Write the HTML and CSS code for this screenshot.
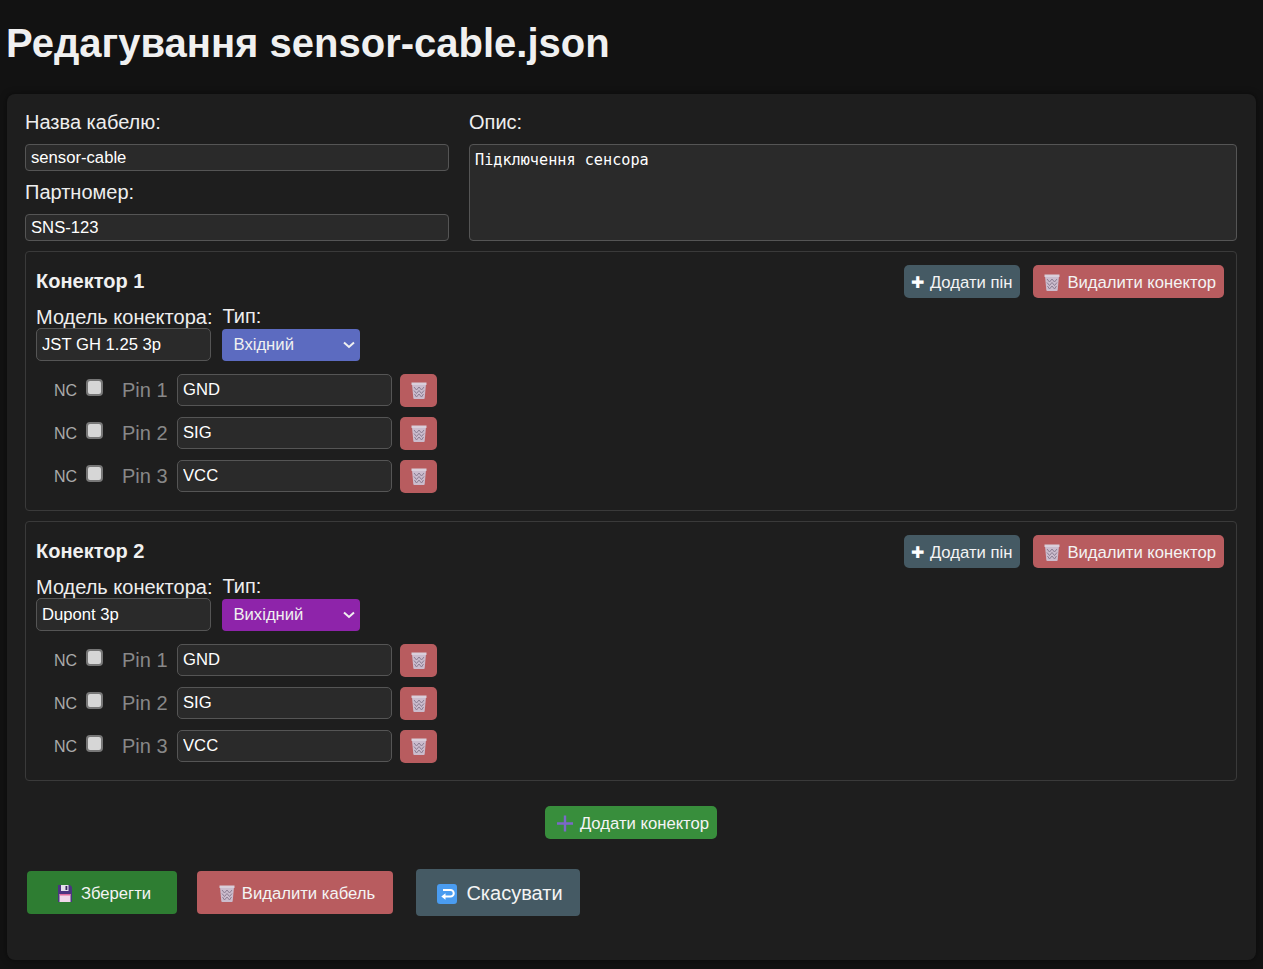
FILE: index.html
```html
<!DOCTYPE html>
<html>
<head>
  <title>Редагування sensor-cable.json</title>
  <link rel="stylesheet" href="styles.css">
</head>
<body>
  <svg class="defs" width="0" height="0">
    <symbol id="trash" viewBox="0 0 16 17">
      <path d="M1 2h14l-1.300 14a1 1 0 0 1-1 1H3.300a1 1 0 0 1-1-1z" fill="#cbbccd"/>
      <path d="M0.500 0.500h15v2.500H0.500z" fill="#d9cfdb"/>
      <path d="M3 5l2.500 3L8 5l2.500 3L13 5M3 8.500l2.500 3L8 8.500l2.500 3 2.500-3M3.500 12l2 3L8 12l2.500 3 2-3" fill="none" stroke="#85778c" stroke-width=".9"/>
    </symbol>
  </svg>

  <h1>Редагування sensor-cable.json</h1>

  <form class="panel">
    <div class="top-fields">
      <div class="col-left">
        <label>Назва кабелю:</label>
        <input type="text" class="field" value="sensor-cable">
        <label>Партномер:</label>
        <input type="text" class="field" value="SNS-123">
      </div>
      <div class="col-right">
        <label>Опис:</label>
        <textarea class="desc">Підключення сенсора</textarea>
      </div>
    </div>

    <div class="connector">
      <div class="conn-head">
        <h3>Конектор 1</h3>
        <div class="conn-actions">
          <button type="button" class="btn btn-slate"><span class="plus-bold">✚</span> Додати пін</button>
          <button type="button" class="btn btn-red"><svg class="ico"><use href="#trash"/></svg> Видалити конектор</button>
        </div>
      </div>
      <div class="conn-meta">
        <div class="meta-model">
          <label>Модель конектора:</label>
          <input type="text" class="model" value="JST GH 1.25 3p">
        </div>
        <div class="meta-type">
          <label>Тип:</label>
          <select class="type type-in"><option>Вхідний</option></select>
        </div>
      </div>
      <div class="pins">
        <div class="pin"><span class="nc">NC</span><input type="checkbox" class="check"><span class="pin-name">Pin 1</span><input type="text" class="pin-input" value="GND"><button type="button" class="pin-del"><svg class="ico"><use href="#trash"/></svg></button></div>
        <div class="pin"><span class="nc">NC</span><input type="checkbox" class="check"><span class="pin-name">Pin 2</span><input type="text" class="pin-input" value="SIG"><button type="button" class="pin-del"><svg class="ico"><use href="#trash"/></svg></button></div>
        <div class="pin"><span class="nc">NC</span><input type="checkbox" class="check"><span class="pin-name">Pin 3</span><input type="text" class="pin-input" value="VCC"><button type="button" class="pin-del"><svg class="ico"><use href="#trash"/></svg></button></div>
      </div>
    </div>

    <div class="connector">
      <div class="conn-head">
        <h3>Конектор 2</h3>
        <div class="conn-actions">
          <button type="button" class="btn btn-slate"><span class="plus-bold">✚</span> Додати пін</button>
          <button type="button" class="btn btn-red"><svg class="ico"><use href="#trash"/></svg> Видалити конектор</button>
        </div>
      </div>
      <div class="conn-meta">
        <div class="meta-model">
          <label>Модель конектора:</label>
          <input type="text" class="model" value="Dupont 3p">
        </div>
        <div class="meta-type">
          <label>Тип:</label>
          <select class="type type-out"><option>Вихідний</option></select>
        </div>
      </div>
      <div class="pins">
        <div class="pin"><span class="nc">NC</span><input type="checkbox" class="check"><span class="pin-name">Pin 1</span><input type="text" class="pin-input" value="GND"><button type="button" class="pin-del"><svg class="ico"><use href="#trash"/></svg></button></div>
        <div class="pin"><span class="nc">NC</span><input type="checkbox" class="check"><span class="pin-name">Pin 2</span><input type="text" class="pin-input" value="SIG"><button type="button" class="pin-del"><svg class="ico"><use href="#trash"/></svg></button></div>
        <div class="pin"><span class="nc">NC</span><input type="checkbox" class="check"><span class="pin-name">Pin 3</span><input type="text" class="pin-input" value="VCC"><button type="button" class="pin-del"><svg class="ico"><use href="#trash"/></svg></button></div>
      </div>
    </div>

    <div class="add-row">
      <button type="button" class="btn btn-add">
        <svg class="ico" viewBox="0 0 16 16"><path d="M6.800 0h2.400v6.800H16v2.400H9.200V16H6.800V9.200H0V6.800h6.800z" fill="#7b68c8"/></svg>
        Додати конектор
      </button>
    </div>

    <div class="bottom-actions">
      <button type="button" class="btn-big btn-save">
        <svg class="ico" viewBox="0 0 16 17">
          <path d="M1 0h12l2 2v15H1z" fill="#4b3480"/>
          <path d="M4 0h7.500v6H4z" fill="#e4e0ea"/>
          <path d="M8.500 1h1.800v4H8.500z" fill="#35255e"/>
          <path d="M2.500 9h11v8h-11z" fill="#f0d8ea"/>
          <path d="M2.500 9h11v1.500h-11z" fill="#e06a9c"/>
        </svg>
        Зберегти
      </button>
      <button type="button" class="btn-big btn-del"><svg class="ico"><use href="#trash"/></svg> Видалити кабель</button>
      <button type="button" class="btn-big btn-cancel">
        <svg class="ico-cancel" viewBox="0 0 20 20">
          <rect width="20" height="20" rx="3" fill="#4a9cf0"/>
          <path d="M6 6h7.500a3.200 3.200 0 0 1 0 6.500H7" fill="none" stroke="#fff" stroke-width="2"/>
          <path d="M8.500 9.200L4.300 12.500l4.200 3.300z" fill="#fff"/>
        </svg>
        Скасувати
      </button>
    </div>
  </form>
</body>
</html>
```

FILE: styles.css
```css
* {
  box-sizing: border-box;
}

body {
  margin: 0;
  padding: 0 7px 9px;
  background-color: #121212;
  color: #f0f0f0;
  font-family: "Liberation Sans", Arial, sans-serif;
}

.defs {
  position: absolute;
}

h1 {
  margin: 0 0 0 -1px;
  padding-top: 20px;
  height: 94px;
  font-size: 40px;
  line-height: 46px;
  font-weight: bold;
}

label {
  display: block;
  font-size: 20px;
  line-height: 23px;
  color: #eee;
}

.panel {
  height: 866px;
  padding: 17px 19px 0 18px;
  background-color: #1e1e1e;
  border-radius: 8px;
  box-shadow: 0 0 6px rgba(0, 0, 0, 0.5);
}

.top-fields {
  display: flex;
  gap: 20px;
}

.col-left {
  width: 424px;
}

.col-right {
  flex: 1;
}

.field {
  display: block;
  width: 100%;
  height: 27px;
  margin: 10px 0;
  padding: 0 5px;
  background-color: #2a2a2a;
  border: 1px solid #555;
  border-radius: 4px;
  color: #fff;
  font-family: inherit;
  font-size: 16.67px;
}

.col-left .field:last-child {
  margin-bottom: 0;
}

.desc {
  display: block;
  width: 100%;
  height: 97px;
  margin-top: 10px;
  padding: 6px 5px;
  background-color: #2a2a2a;
  border: 1px solid #555;
  border-radius: 4px;
  color: #fff;
  font-family: "DejaVu Sans Mono", monospace;
  font-size: 15.2px;
  resize: none;
}

.connector {
  height: 260px;
  margin-top: 10px;
  padding: 13px 12px 0 10px;
  border: 1px solid #3a3a3a;
  border-radius: 4px;
}

.conn-head {
  display: flex;
  justify-content: space-between;
  align-items: center;
  height: 33px;
}

.conn-head h3 {
  margin: 0;
  font-size: 20px;
  font-weight: bold;
}

.conn-actions {
  display: flex;
  gap: 13px;
}

.btn {
  display: flex;
  align-items: center;
  gap: 5px;
  height: 33px;
  padding: 2px 7px 0 8px;
  border: none;
  border-radius: 5px;
  color: #f4f4f4;
  font-family: inherit;
  font-size: 16.67px;
}

.btn-slate {
  gap: 6px;
  padding: 2px 8px 0 7px;
  background-color: #455a64;
}

.btn-red {
  gap: 7px;
  padding: 2px 8px 0 11px;
  background-color: #b85c5f;
}

.plus-bold {
  font-size: 16px;
  color: #fff;
}

.ico {
  width: 16px;
  height: 17px;
  flex: none;
}

.conn-meta {
  display: flex;
  gap: 10px;
  margin-top: 7px;
}

.meta-model label {
  margin-top: 1px;
}

.model {
  display: block;
  width: 175px;
  height: 33px;
  margin-top: -1px;
  padding: 0 5px;
  background-color: #2a2a2a;
  border: 1px solid #555;
  border-radius: 5px;
  color: #fff;
  font-family: inherit;
  font-size: 16.67px;
}

.type {
  display: block;
  width: 138px;
  height: 32px;
  margin-top: 1px;
  padding: 0 11px 2px;
  appearance: none;
  background-image: url("data:image/svg+xml,%3Csvg xmlns='http://www.w3.org/2000/svg' width='12' height='8'%3E%3Cpath d='M1 1.500l5 4.500 5-4.500' fill='none' stroke='%23f0f0f0' stroke-width='2'/%3E%3C/svg%3E");
  background-repeat: no-repeat;
  background-position: right 5px center;
  border: none;
  border-radius: 4px;
  color: #f0f0f0;
  font-family: inherit;
  font-size: 16.67px;
}

.type-in {
  background-color: #5c6bc0;
}

.type-out {
  background-color: #8e24aa;
}

.pins {
  margin-top: 13px;
}

.pin {
  display: flex;
  align-items: center;
  height: 33px;
  margin-bottom: 10px;
  padding-left: 18px;
}

.nc {
  width: 32px;
  font-size: 16px;
  color: #aaa;
}

.check {
  width: 17px;
  height: 17px;
  margin: -6px 0 0;
  appearance: none;
  background-color: #d6d6d6;
  border: 2px solid #777;
  border-radius: 4px;
}

.pin-name {
  width: 55px;
  margin-left: 19px;
  font-size: 20px;
  color: #888;
}

.pin-input {
  align-self: flex-start;
  width: 215px;
  height: 32px;
  padding: 0 5px;
  background-color: #2a2a2a;
  border: 1px solid #555;
  border-radius: 5px;
  color: #fff;
  font-family: inherit;
  font-size: 16.67px;
}

.pin-del {
  display: flex;
  align-items: center;
  justify-content: center;
  width: 37px;
  height: 33px;
  margin-left: 8px;
  padding: 0;
  background-color: #b85c5f;
  border: none;
  border-radius: 5px;
}

.add-row {
  display: flex;
  justify-content: center;
  margin-top: 25px;
}

.btn-add {
  gap: 7px;
  padding: 2px 8px 0 12px;
  background-color: #388e3c;
}

.bottom-actions {
  display: flex;
  align-items: center;
  margin-top: 30px;
  padding-left: 2px;
}

.btn-big {
  display: flex;
  align-items: center;
  justify-content: center;
  gap: 8px;
  height: 43px;
  padding: 2px 0 0 4px;
  border: none;
  border-radius: 4px;
  color: #f4f4f4;
  font-family: inherit;
  font-size: 16.67px;
}

.btn-save {
  width: 150px;
  background-color: #2e7d32;
}

.btn-del {
  gap: 7px;
  width: 196px;
  margin-left: 20px;
  background-color: #b85c5f;
}

.btn-cancel {
  gap: 9px;
  width: 164px;
  height: 47px;
  margin-left: 23px;
  background-color: #455a64;
  font-size: 20px;
}

.ico-cancel {
  width: 20px;
  height: 20px;
}
```
